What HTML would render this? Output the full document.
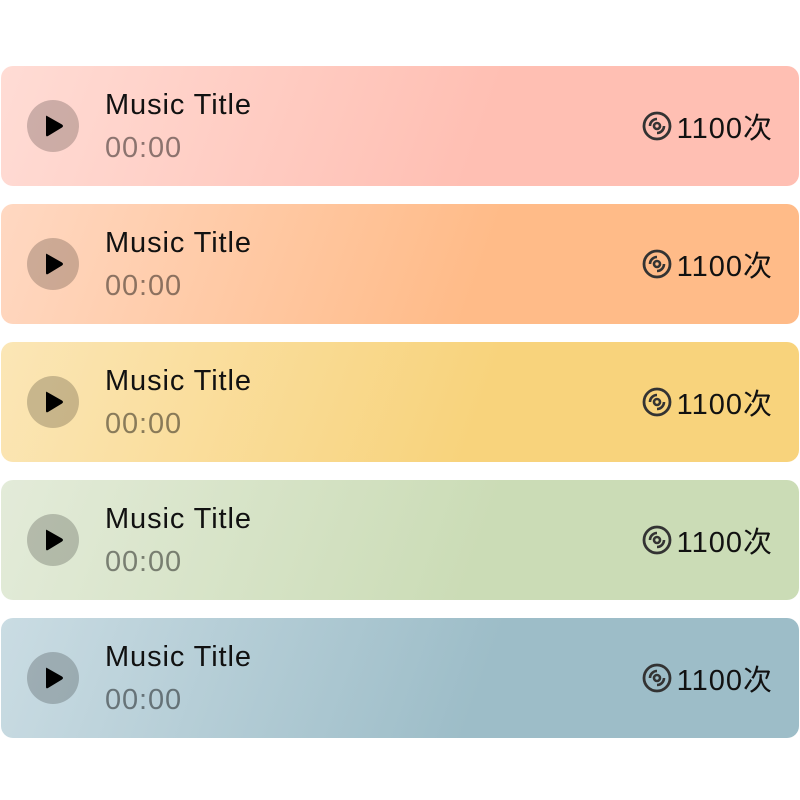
<!DOCTYPE html>
<html><head><meta charset="utf-8"><style>
body{margin:0;width:800px;height:800px;background:#fff;font-family:"Liberation Sans","Noto Sans CJK SC",sans-serif;position:relative;overflow:hidden}
.c{position:absolute;left:1px;width:798px;height:120px;border-radius:12px}
.p{position:absolute;left:26px;top:34px;width:52px;height:52px;border-radius:50%;background:rgba(0,0,0,0.2)}
.p svg{position:absolute;left:0;top:0}
.t{position:absolute;left:104px;top:23px;font-size:29px;letter-spacing:0.9px;color:#111}
.d{position:absolute;left:104px;top:66px;font-size:29px;letter-spacing:0.9px;color:rgba(0,0,0,0.45)}
.r{position:absolute;right:26px;top:43px;height:34px;font-size:29px;letter-spacing:1px;color:#111;display:flex;align-items:center}
.r svg{margin-right:5px}
</style></head><body>
<div class="c" style="top:66px;background:linear-gradient(110deg,#ffdcd5 0%,#ffbfb3 60%,#ffbfb3 100%)"></div>
<div class="c" style="top:204px;background:linear-gradient(110deg,#ffd8c2 0%,#ffbb88 60%,#ffbb88 100%)"></div>
<div class="c" style="top:342px;background:linear-gradient(110deg,#fbe6b6 0%,#f8d37c 60%,#f8d37c 100%)"></div>
<div class="c" style="top:480px;background:linear-gradient(110deg,#e3ebd9 0%,#cbdcb6 60%,#cbdcb6 100%)"></div>
<div class="c" style="top:618px;background:linear-gradient(110deg,#cadce3 0%,#9dbdc8 60%,#9dbdc8 100%)"></div>
<script>
var tops=[66,204,342,480,618],h='';
tops.forEach(function(t){
h+='<div class="c" style="top:'+t+'px;background:none"><div class="p"><svg width="52" height="52"><path d="M20 16 Q19 15 19 17 L19 35 Q19 37 21 36 L35 27.5 Q37 26 35 24.5 Z" fill="#000"/></svg></div><div class="t">Music Title</div><div class="d">00:00</div><div class="r"><svg width="30" height="30" viewBox="0 0 30 30"><circle cx="15" cy="15" r="13" fill="none" stroke="#333" stroke-width="2.8"/><circle cx="15" cy="15" r="3" fill="none" stroke="#333" stroke-width="2.6"/><path d="M8 15 A7 7 0 0 1 15 8" fill="none" stroke="#333" stroke-width="2.6"/><path d="M22 15 A7 7 0 0 1 15 22" fill="none" stroke="#333" stroke-width="2.6"/></svg>1100次</div></div>';
});
document.write(h);
</script>
</body></html>
